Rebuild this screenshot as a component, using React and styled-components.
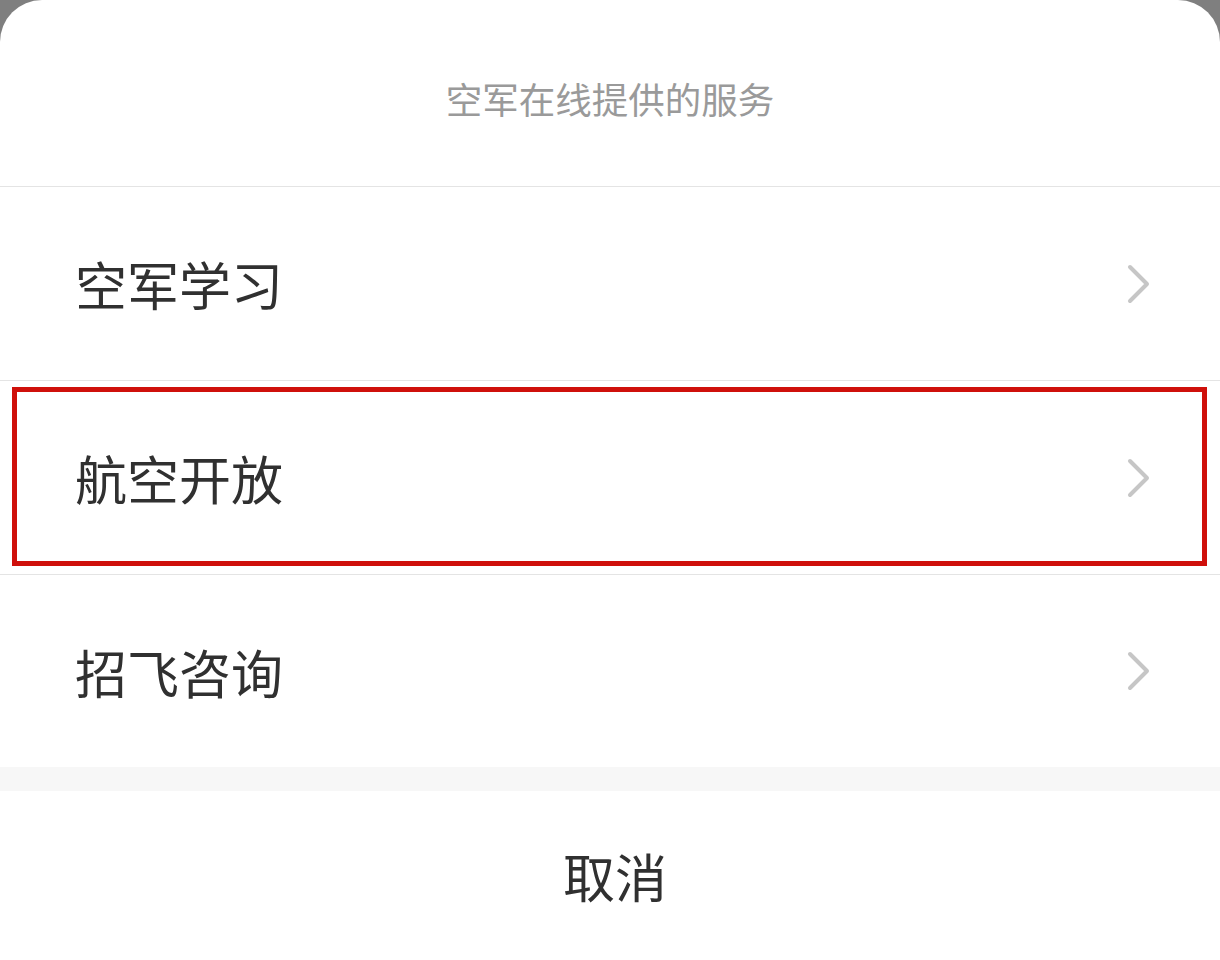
import React from "react";
import styled, { createGlobalStyle } from "styled-components";

const Global = createGlobalStyle`
  html, body { margin: 0; padding: 0; background: #7f7f7f; }
  body { font-family: "Noto Sans CJK SC", "Noto Sans", sans-serif; }
`;

const Sheet = styled.div`
  width: 1220px;
  height: 960px;
  background: #fff;
  border-radius: 42px 42px 0 0;
  display: flex;
  flex-direction: column;
  overflow: hidden;
`;

const Header = styled.div`
  height: 187px;
  flex: none;
  display: flex;
  align-items: center;
  justify-content: center;
  padding-top: 10px;
  box-sizing: border-box;
  color: #9a9a9a;
  font-size: 36.5px;
  border-bottom: 1px solid #e4e4e4;
`;

const Row = styled.div`
  position: relative;
  flex: none;
  height: ${(p) => (p.$last ? "192px" : "194px")};
  box-sizing: border-box;
  display: flex;
  align-items: center;
  justify-content: space-between;
  padding: 0 68px 0 75px;
  font-size: 52px;
  color: #303030;
  border-bottom: ${(p) => (p.$last ? "none" : "1px solid #e4e4e4")};
`;

const Highlight = styled.div`
  position: absolute;
  left: 12px;
  right: 13px;
  top: 6px;
  bottom: 8px;
  border: 5px solid #cf100b;
  pointer-events: none;
`;

const Gap = styled.div`
  flex: none;
  height: 24px;
  background: #f7f7f7;
`;

const Cancel = styled.div`
  flex: 1;
  display: flex;
  align-items: center;
  justify-content: center;
  font-size: 52px;
  color: #303030;
  padding-left: 10px;
`;

const Chevron = () => (
  <svg width="26" height="40" viewBox="0 0 26 40">
    <polyline
      points="4,3 21,20 4,37"
      fill="none"
      stroke="#c6c6c6"
      strokeWidth="4"
      strokeLinecap="round"
      strokeLinejoin="round"
    />
  </svg>
);

const items = ["空军学习", "航空开放", "招飞咨询"];

export default function App() {
  return (
    <>
      <Global />
      <Sheet>
        <Header>空军在线提供的服务</Header>
        {items.map((t, i) => (
          <Row key={t} $last={i === items.length - 1}>
            <span>{t}</span>
            <Chevron />
            {i === 1 && <Highlight />}
          </Row>
        ))}
        <Gap />
        <Cancel>取消</Cancel>
      </Sheet>
    </>
  );
}
